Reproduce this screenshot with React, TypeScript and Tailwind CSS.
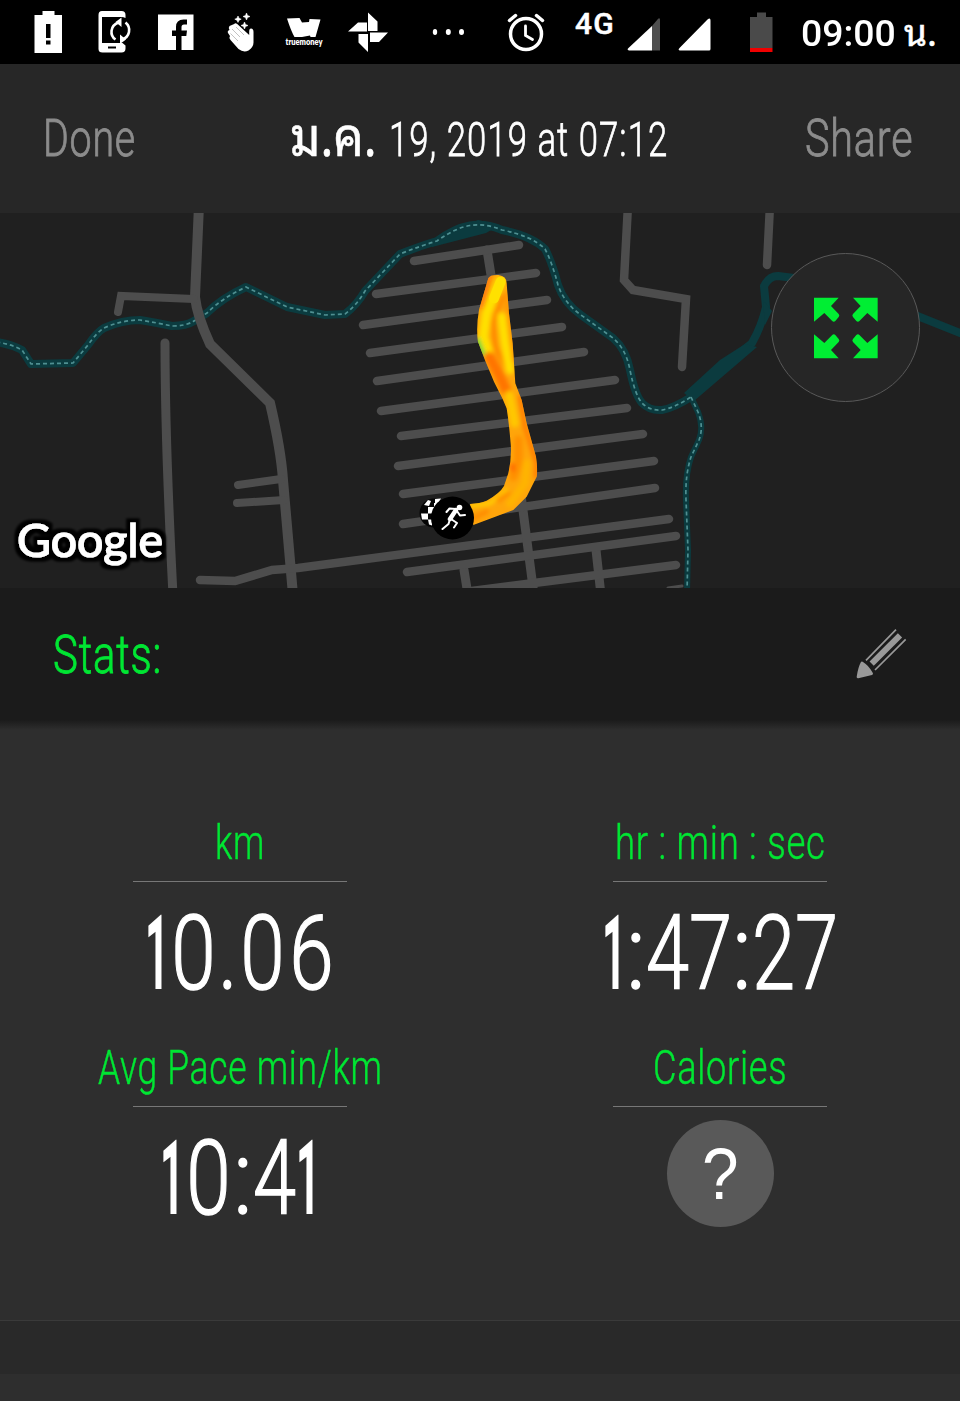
import { useLayoutEffect, useRef, useState } from 'react';
import type { ReactNode } from 'react';

type FitTextProps = {
  width: number;
  className?: string;
  children: ReactNode;
};

// Condenses a line of text horizontally until it is `width` pixels wide
const FitText = ({ width, className = '', children }: FitTextProps) => {
  const ref = useRef<HTMLSpanElement>(null);
  const [scale, setScale] = useState(0.75);

  useLayoutEffect(() => {
    if (ref.current) setScale(width / ref.current.offsetWidth);
  }, [width]);

  return (
    <span className="block" style={{ width }}>
      <span
        ref={ref}
        className={`inline-block origin-left whitespace-nowrap ${className}`}
        style={{ transform: `scaleX(${scale})` }}
      >
        {children}
      </span>
    </span>
  );
};

const StatusBar = () => (
  <div className="flex h-16 items-start bg-black pl-[34px] text-white">
    {/* Battery alert */}
    <svg className="h-16 w-7 shrink-0" viewBox="34 0 28 64">
      <path d="M42.500 11h12v4h7.500v38H34.500V15h8z" fill="#fff" />
      <path d="M46 24h4.500v14H46zM46 40.500h4.500v4H46z" fill="#000" />
    </svg>
    {/* Phone sync */}
    <svg className="ml-9 h-16 w-[34px] shrink-0" viewBox="98 0 34 64" fill="none">
      <path d="M125.500 18V15q0-4-4-4H102q-3.500 0-3.500 4v34q0 3.500 4 3.500h19q4 0 4-4v-3l-3-2.500H102V17h19.500q2 0 4 1z" fill="#fff" />
      <path d="M108 47.500h8" stroke="#000" strokeWidth="2" />
      <path d="M115.500 39.500c-6-4-5.500-14 3-17M125.500 22.500c6 5 4.500 14.500-3.500 17" stroke="#fff" strokeWidth="2.600" />
      <path d="M115.500 22l6-4.500v9.500zM126 39.500l-6 4.500V34.500z" fill="#fff" />
    </svg>
    {/* Facebook */}
    <svg className="ml-[26px] h-16 w-[36px] shrink-0" viewBox="158 0 36 64">
      <path d="M158 14.500h35.500V50H158z" fill="#fff" />
      <path d="M176 50V36h-4v-5.500h4v-3.500q0-7.500 7.500-7.500h3.500v5h-3q-2.500 0-2.500 2.500v3.500h5.500l-.7 5.500h-4.800v14z" fill="#000" />
    </svg>
    {/* Waving hand */}
    <svg className="ml-[33px] h-16 w-7 shrink-0" viewBox="227 0 28 64">
      <path d="M229.500 26q-1.500 2 0 4-2.500 1-1.500 3l2 3q-1.500 2 .5 4l8 9q5 4 10 1.500 5-3.500 5-8V32q0-3.500-2.500-3.500-1.800 0-1.800 3v3.500l-12-11q-2-1.500-3 0z" fill="#fff" />
      <path d="M232 29l8 8M230.500 33.500l7.500 7.500M236 27l8 8" stroke="#999" strokeWidth=".6" />
      <path d="M238 16l1 2.200 2.200 1-2.200 1-1 2.200-1-2.200-2.200-1 2.200-1zM246.500 13l1 2.500 2.500 1-2.500 1-1 2.500-1-2.500-2.500-1 2.500-1zM244.500 22l1 2.500 2.500 1-2.500 1-1 2.500-1-2.500-2.500-1 2.500-1z" fill="#fff" stroke="#fff" strokeWidth=".6" />
    </svg>
    {/* True money */}
    <svg className="ml-[27px] h-16 w-[45px] shrink-0" viewBox="282 0 45 64" fill="#fff">
      <path d="M287 18.500l12.500-.5 2.500 4.500 7-.5.500-3 11 .5-5 17.500h-5l-.5-1.500-8 1.500h-7.500q-3.500-6-7.500-18.500z" />
      <text x="285.500" y="45" fontFamily="Lato, sans-serif" fontSize="9.500" fontWeight="800" textLength="37" lengthAdjust="spacingAndGlyphs">truemoney</text>
    </svg>
    {/* Photos pinwheel */}
    <svg className="ml-[21px] h-16 w-10 shrink-0" viewBox="348 0 40 64" fill="#fff">
      <path d="M368 12.500l9.500 9V31H368zM388 32.500l-9 9.500h-9v-9.500zM368 52l-9.500-9.500V34h9.500zM348 31.500l10-9h9v9z" />
    </svg>
    {/* More notifications */}
    <svg className="ml-11 h-16 w-8 shrink-0" viewBox="432 0 32 64" fill="#fff">
      <ellipse cx="435" cy="32" rx="2.200" ry="3" />
      <ellipse cx="448.300" cy="32" rx="2.500" ry="3" />
      <ellipse cx="461.500" cy="32" rx="2.500" ry="3" />
    </svg>
    {/* Alarm */}
    <svg className="ml-[43px] h-16 w-[38px] shrink-0" viewBox="507 0 38 64" fill="none" stroke="#fff">
      <circle cx="526" cy="34" r="15.500" strokeWidth="3.500" />
      <path d="M525.500 26v9.500l7 4" strokeWidth="2.800" strokeLinecap="round" />
      <path d="M509.500 20.500l6-5M542.500 20.500l-6-5" strokeWidth="3.500" strokeLinecap="round" />
    </svg>
    <div className="ml-[30px] mt-[9px] font-['Roboto'] text-[30px] leading-[30px] font-medium">
      <FitText width={40} className="tracking-[0.04em] [-webkit-text-stroke:0.5px_white]">4G</FitText>
    </div>
    {/* Signal strength */}
    <svg className="ml-[12px] h-16 w-[33px] shrink-0" viewBox="627 0 33 64">
      <path d="M652 26l5.500-6.500q2.500-2.500 2.500.5v30.500h-8z" fill="#4f4f4f" />
      <path d="M652 26v24.500h-23q-2.500-.5-.5-2.500z" fill="#fff" />
    </svg>
    <svg className="ml-[17px] h-16 w-[34px] shrink-0" viewBox="677 0 34 64">
      <path d="M707.500 19.500q3-2.500 3 1V49q0 1.500-1.500 1.500h-29q-2.500-.5-.5-2.500z" fill="#fff" />
    </svg>
    {/* Battery */}
    <svg className="ml-[39px] h-16 w-[23px] shrink-0" viewBox="750 0 23 64">
      <path d="M757 12.500h9V17h6.500v31h-22.500V17h7z" fill="#4a4a4a" />
      <path d="M750 48h22.500v4H750z" fill="#f00000" />
    </svg>
    <div className="ml-[28px] mt-[13px] flex font-['Roboto'] text-[37px] leading-[42px] font-medium">
      <FitText width={95}>09:00</FitText>
      <span className="ml-2 -mt-[4px]">
        <FitText width={33} className="font-['Noto_Sans_Thai_Looped','Loma','Waree','Roboto',sans-serif] font-normal [-webkit-text-stroke:0.5px_white]">น.</FitText>
      </span>
    </div>
  </div>
);

const Header = () => (
  <div className="flex h-[149px] items-start justify-between bg-[#272727] pl-[43px] pr-[47px] pt-[45px] font-['Roboto'] leading-[60px] font-light">
    <button className="text-[52px] text-[#8c8c8c]">
      <FitText width={93} className="tracking-[0.02em] [-webkit-text-stroke:0.9px_#8c8c8c]">Done</FitText>
    </button>
    <h1 className="mt-[1px] ml-[17px] flex gap-3 text-[49px] text-white">
      <span className="-mt-[8px]">
        <FitText width={87} className="font-['Noto_Sans_Thai_Looped','Loma','Waree','Roboto',sans-serif] text-[54px] font-normal [-webkit-text-stroke:0.6px_white]">
          ม.ค.
        </FitText>
      </span>
      <FitText width={279} className="tracking-[0.03em] [-webkit-text-stroke:0.8px_white]">19, 2019 at 07:12</FitText>
    </h1>
    <button className="text-[52px] text-[#8c8c8c]">
      <FitText width={108} className="tracking-[0.02em] [-webkit-text-stroke:0.9px_#8c8c8c]">Share</FitText>
    </button>
  </div>
);

const RIVER =
  'M-4 342C10 344 16 347 22 350L31 364L73 363L88 345Q97 332 104 328Q122 320 140 320Q158 323 172 326Q186 326 194 321L207 313Q222 298 246 287L287 307L325 315L345 314Q357 305 365 291L400 254Q420 246 437 241Q455 228 470 225.500Q485 223 502 230Q532 236 545 249Q552 262 558 285Q564 303 581 315L613 338Q626 349 630 370Q635 395 642 403Q650 411 662 410Q674 408 691 397';
const BRANCH = 'M691 397L698 412Q704 427 699 440L691 457Q685 475 686 500L688 550L687 592';

// Side streets inside the village, as [x1, y1, x2, y2]
const STREETS = [
  [414, 261, 519, 245],
  [376, 294, 536, 273],
  [363, 325, 547, 300],
  [370, 353, 562, 327],
  [377, 381, 584, 352],
  [381, 411, 615, 380],
  [401, 436, 627, 408],
  [398, 466, 643, 434],
  [403, 494, 654, 461],
  [403, 524, 655, 488],
  [407, 572, 676, 536],
  [440, 595, 676, 565],
];

const Map = () => (
  <div className="relative h-[375px] overflow-hidden bg-[#202020]">
    <svg className="block h-full w-full" viewBox="0 213 960 375" fill="none">
      <defs>
        <filter id="soft" x="-10%" y="-10%" width="120%" height="120%">
          <feGaussianBlur stdDeviation="6" />
        </filter>
        <filter id="halo" x="-10%" y="-20%" width="120%" height="140%">
          <feMorphology in="SourceAlpha" operator="dilate" radius="4" result="grown" />
          <feGaussianBlur in="grown" stdDeviation="1" result="edge" />
          <feMerge>
            <feMergeNode in="edge" />
            <feMergeNode in="SourceGraphic" />
          </feMerge>
        </filter>
        <clipPath id="route">
          <path d="M445 205Q450 194 475 195Q500 198 500 220L507 310L518 400L526 520L545 570L560 640L588 740Q594 780 590 800L560 860L520 900L400 945L390 882Q420 880 440 872Q480 850 492 828L505 790Q516 740 512 700Q506 630 500 595L487 565L462 515L435 450L414 395Q408 350 417 300Z" />
        </clipPath>
      </defs>

      {/* Water */}
      <g stroke="#0b3b3f" strokeLinejoin="round">
        <path d={RIVER} strokeWidth="8" />
        <path d={BRANCH} strokeWidth="6" />
        <path d="M691 392L752 343Q762 325 766 307L764 286Q769 276 778 276L794 278" strokeWidth="8" />
        <path d="M910 313L965 335" strokeWidth="8" />
      </g>
      <path d="M684 393L720 360L745 344L757 347L694 401ZM431 240L478 220L500 225L486 233L432 247ZM763 300L772 311L765 325Z" fill="#0b3b3f" />
      <path d={RIVER} stroke="#4f8f91" strokeWidth="1.700" strokeDasharray="4 3" />
      <path d={BRANCH} stroke="#4f8f91" strokeWidth="1.700" strokeDasharray="4 3" />

      {/* Roads */}
      <g stroke="#4d4d4d" strokeLinecap="round">
        <path d="M199 205L195 297Q197 316 210 344L270 403Q281 450 283 480L293 595" strokeWidth="10" />
        <path d="M118 312L121 296L194 299" strokeWidth="8" />
        <path d="M165 343Q165 440 173 595" strokeWidth="9" />
        <path d="M238 485L281 479M237 503L284 500" strokeWidth="8" />
        <path d="M200 580L235 581L272 570L298 568L669 519" strokeWidth="8.500" />
        <path d="M628 205L624 280L633 290L686 299L682 367" strokeWidth="8.500" />
        <path d="M770 205L767 265" strokeWidth="8.500" />
        <path d="M487 250L491 275M521 495L534 595M464 570L468 595M596 550L601 595" strokeWidth="9" />
        <path d="M668 588L682 586" strokeWidth="3" />
        {STREETS.map(([x1, y1, x2, y2]) => (
          <line key={y1} x1={x1} y1={y1} x2={x2} y2={y2} strokeWidth="8.500" />
        ))}
      </g>

      {/* Route, coloured by pace */}
      <g transform="translate(340 210) scale(.3333)">
        <g clipPath="url(#route)">
          <path d="M380 180h230v780H380z" fill="#ffa50a" />
          <g filter="url(#soft)" strokeLinecap="round" strokeLinejoin="round">
            <path d="M448 195L425 290" stroke="#ff7a0c" strokeWidth="16" />
            <path d="M480 215L440 310L430 380L445 430" stroke="#ffe000" strokeWidth="30" />
            <path d="M485 260L460 340L465 410L500 470" stroke="#ff8a00" strokeWidth="16" />
            <path d="M485 320L495 400L510 480" stroke="#ffdf00" strokeWidth="26" />
            <path d="M498 250L508 340L520 450" stroke="#ff8c00" strokeWidth="8" />
            <path d="M448 440L480 500L498 540" stroke="#ff7400" strokeWidth="30" />
            <path d="M508 555L524 640" stroke="#ffc800" strokeWidth="26" />
            <path d="M540 560L555 650L590 760L588 800" stroke="#ff7800" strokeWidth="12" />
            <path d="M535 690L535 760L520 800" stroke="#ff9000" strokeWidth="26" />
            <path d="M518 765L518 780" stroke="#ff5e00" strokeWidth="12" />
            <path d="M560 760L555 820L510 880" stroke="#ffb400" strokeWidth="24" />
            <path d="M395 888L450 880L500 840" stroke="#ffd800" strokeWidth="10" />
            <path d="M475 870L505 850M400 925L440 905" stroke="#ff8a00" strokeWidth="14" />
            <path d="M412 390L428 430" stroke="#45d63c" strokeWidth="14" />
          </g>
          <path d="M482 215L462 265" stroke="#ffe100" strokeWidth="30" strokeLinecap="round" />
        </g>
      </g>

      {/* Finish flag and runner */}
      <circle cx="434" cy="513" r="14.500" fill="#050505" />
      <path d="M424 505l4-5 3 1-2 5zM435 499l6-.5-3 5-3 1zM421 513.500h7v6h-6zM428 507h6v6.500h-6zM428 519.500h4v6l-3-1zM434 503h3v4h-3z" fill="#fff" />
      <circle cx="452.500" cy="518" r="21.500" fill="#000" />
      <g stroke="#fff" strokeLinecap="round" strokeLinejoin="round">
        <circle cx="459.500" cy="507.500" r="2.800" fill="#fff" stroke="none" />
        <path d="M456 510L450 519" strokeWidth="4.500" />
        <path d="M456 509L449.500 508.500L446.500 512M457 511L460 515.500L465 515M451 519L457 523L454 527.500M450 519L448.500 524L442.500 529" strokeWidth="2" />
      </g>

      <text
        x="17"
        y="557"
        fontFamily="Lato, sans-serif"
        fontSize="47"
        textLength="146"
        lengthAdjust="spacingAndGlyphs"
        fill="#fff"
        stroke="#fff"
        strokeWidth="1.200"
        filter="url(#halo)"
      >
        Google
      </text>
    </svg>

    <button className="absolute left-[771px] top-[40px] flex h-[149px] w-[149px] items-center justify-center rounded-full border border-[#595959] bg-[#262626]">
      <svg className="h-[62px] w-16" viewBox="642 263 192 184" fill="#00ee33">
        <path id="corner" d="M642 264H716L693 289L716 313Q720 317 716 322L706 334Q701 339 696 333L673 310L642 336Z" />
        <use href="#corner" transform="translate(1475 0) scale(-1 1)" />
        <use href="#corner" transform="translate(0 710) scale(1 -1)" />
        <use href="#corner" transform="translate(1475 710) scale(-1 -1)" />
      </svg>
    </button>
  </div>
);

const StatsBar = () => (
  <div>
    <div className="flex h-[132px] items-start justify-between bg-[#1b1b1b] pl-[53px] pr-[52px] pt-[37px]">
      <h2 className="font-['Roboto'] text-[53px] leading-[60px] font-light text-[#00e633]">
        <FitText width={109} className="tracking-[0.02em] [-webkit-text-stroke:0.9px_#00e633]">Stats:</FitText>
      </h2>
      <svg className="mt-[3px] h-[54px] w-[52px]" viewBox="168 116 156 162" fill="none" stroke="#999">
        <path d="M186 221Q178 236 174 263L215 253Q202 230 186 221Z" fill="#999" strokeWidth="8" strokeLinejoin="round" />
        <path d="M215 223L300 138" strokeWidth="18" />
        <path d="M198 213L288 121M225 242L317 150" strokeWidth="5" />
      </svg>
    </div>
    <div className="h-[10px] bg-gradient-to-b from-[#1b1b1b] to-[#2e2e2e]"></div>
  </div>
);

type StatProps = {
  label: string;
  labelWidth: number;
  children: ReactNode;
};

const Stat = ({ label, labelWidth, children }: StatProps) => (
  <div className="flex h-[225px] flex-col items-center font-['Roboto']">
    <div className="h-[68px] text-[48px] leading-[60px] font-light text-[#00e633]">
      <FitText width={labelWidth} className="tracking-[0.02em] [-webkit-text-stroke:0.5px_#00e633]">{label}</FitText>
    </div>
    <div className="h-px w-[214px] bg-[#777]"></div>
    {children}
  </div>
);

// Advance width of each character; anything not listed takes the default
const CELL: Record<string, number> = { '0': 49, '6': 49, '1': 24, '.': 20, ':': 20 };

const Value = ({ children }: { children: string }) => (
  <div className="mt-[12px] flex text-[103px] leading-[120px] text-white">
    {children.split('').map((char, i) => (
      <FitText
        key={i}
        width={CELL[char] ?? 43}
        className={
          char === '1'
            ? 'font-bold'
            : CELL[char] === 49
              ? 'px-[3px] font-light [-webkit-text-stroke:1.4px_white]'
              : 'font-light [-webkit-text-stroke:1.4px_white]'
        }
      >
        {char}
      </FitText>
    ))}
  </div>
);

export default function App() {
  return (
    <div className="h-[1401px] w-[960px] overflow-hidden bg-[#2e2e2e]">
      <StatusBar />
      <Header />
      <Map />
      <StatsBar />
      <div className="grid h-[590px] grid-cols-2 content-start pt-[83px]">
        <Stat label="km" labelWidth={50}>
          <Value>10.06</Value>
        </Stat>
        <Stat label="hr : min : sec" labelWidth={211}>
          <Value>1:47:27</Value>
        </Stat>
        <Stat label="Avg Pace min/km" labelWidth={285}>
          <Value>10:41</Value>
        </Stat>
        <Stat label="Calories" labelWidth={134}>
          <div className="mt-[13px] flex h-[107px] w-[107px] items-center justify-center rounded-full bg-[#595959] font-['Liberation_Sans'] text-[73px] leading-none text-white">
            <span className="scale-x-90">?</span>
          </div>
        </Stat>
      </div>
      <div className="h-[54px] border-t border-[#3a3a3a] bg-[#292929]"></div>
    </div>
  );
}
